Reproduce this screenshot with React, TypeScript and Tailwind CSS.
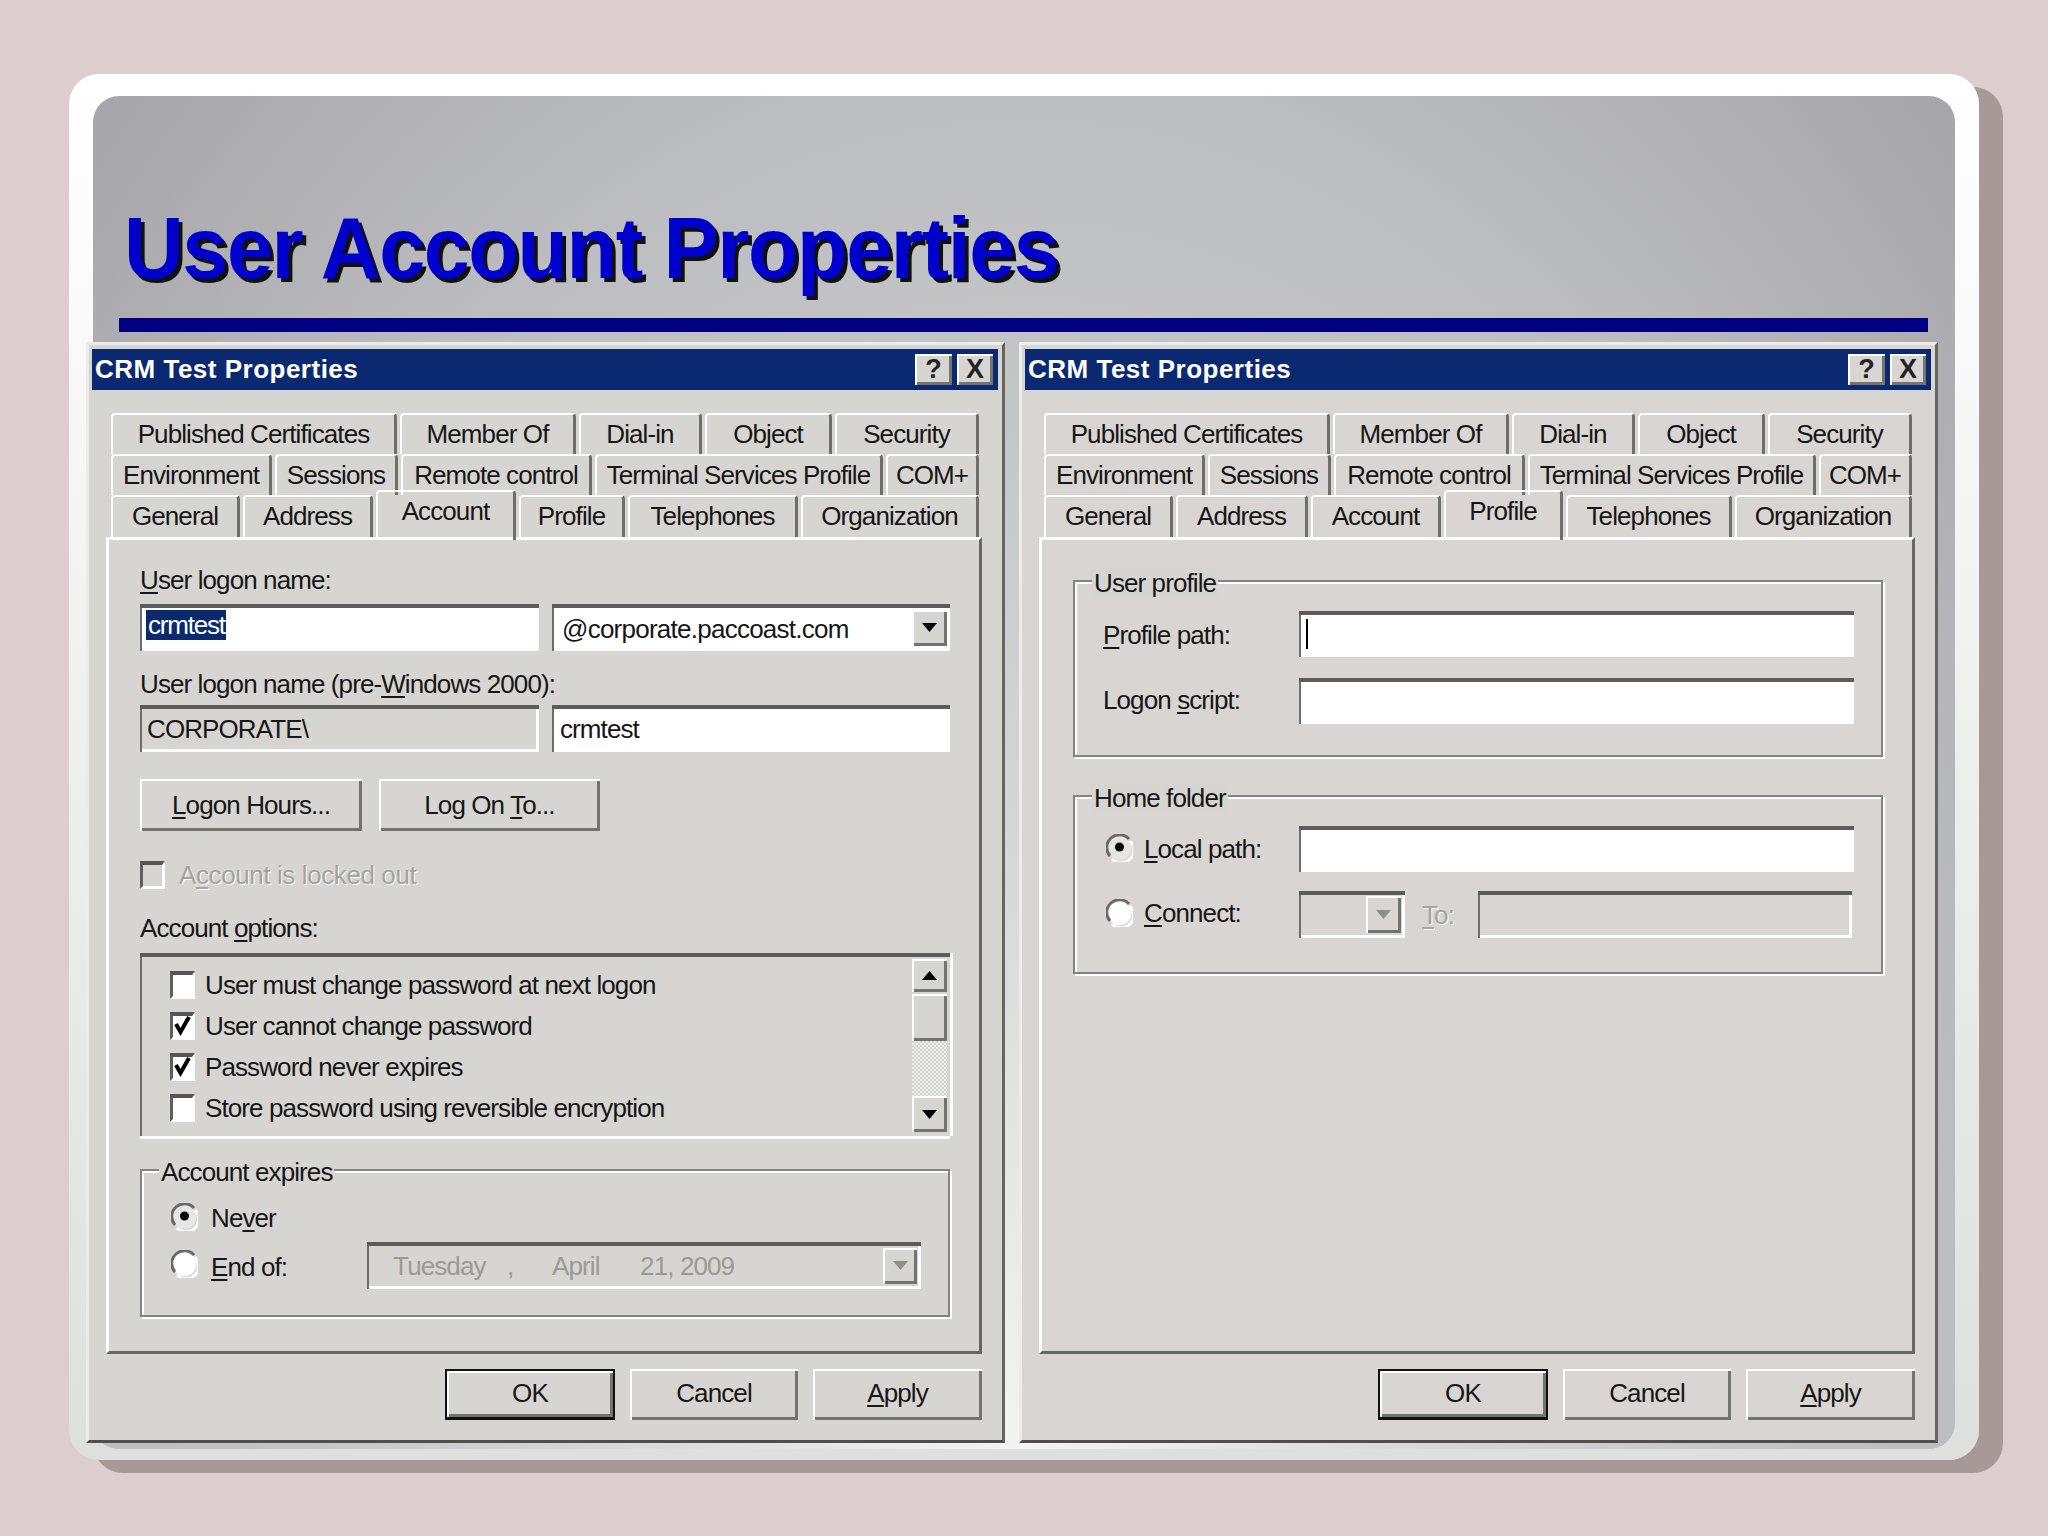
import type { ReactNode } from "react"

const RAISED = "shadow-[inset_2px_2px_0_#fff,inset_-3px_-3px_0_#737370]"
const SUNKEN = "shadow-[inset_0_4px_0_#5c5c5a,inset_2px_0_0_#6e6e6c,inset_-3px_-3px_0_#fff]"
const DISABLED_TEXT = "text-[#a3a39f] [text-shadow:1px_1px_0_#fff]"

const rowOne = [
    {label: "Published Certificates", width: 286},
    {label: "Member Of", width: 176},
    {label: "Dial-in", width: 123},
    {label: "Object", width: 127},
    {label: "Security", width: 144},
]
const rowTwo = [
    {label: "Environment", width: 161},
    {label: "Sessions", width: 123},
    {label: "Remote control", width: 191},
    {label: "Terminal Services Profile", width: 288},
    {label: "COM+", width: 93},
]

function Tab({label, width, active, tall}: {label: string; width: number; active?: boolean; tall?: boolean}) {
    return (
        <div
            style={{width}}
            className={`flex items-center justify-center rounded-t-[4px] border-l-2 border-t-2 border-r-[3px] border-l-white border-t-white border-r-[#6e6e6b] ${
                active ? "relative z-10 -mb-[3px] -mt-[5px] h-[50px] pb-[10px]" : tall ? "h-[42px] pb-[2px]" : "h-[41px] pb-[2px]"
            }`}
        >
            {label}
        </div>
    )
}

function Key({children}: {children: ReactNode}) {
    return <span className="underline decoration-2 underline-offset-[3px]">{children}</span>
}

function Arrow({down = true, disabled}: {down?: boolean; disabled?: boolean}) {
    return (
        <svg width="17" height="11" viewBox="0 0 17 11">
            <path d={down ? "M1 1h15L8.5 10z" : "M1 10h15L8.5 1z"} fill={disabled ? "#8f8f8c" : "#000"} />
        </svg>
    )
}

function Check({checked, disabled}: {checked?: boolean; disabled?: boolean}) {
    return (
        <div
            className={`flex h-[28px] w-[25px] shrink-0 items-center justify-center border-b-[3px] border-l-[3px] border-r-[3px] border-t-[4px] border-b-white border-l-[#5e5e5c] border-r-white border-t-[#545452] ${
                disabled ? "bg-transparent" : "bg-white"
            }`}
        >
            {checked && (
                <svg width="17" height="21" viewBox="0 0 17 21">
                    <path d="M2 8l4.5 8L15 1" fill="none" stroke="#000" strokeWidth="4" />
                </svg>
            )}
        </div>
    )
}

function Radio({on}: {on?: boolean}) {
    return (
        <svg width="27" height="28" viewBox="0 0 27 28" className="mb-[3px] shrink-0">
            <circle cx="13.5" cy="14" r="12" fill={on ? "#e6e6e3" : "#fff"} />
            <path d="M4 22A12.5 12.5 0 0 1 23 5" fill="none" stroke="#6a6a68" strokeWidth="3" />
            <path d="M24 7A12.5 12.5 0 0 1 6 25" fill="none" stroke="#fff" strokeWidth="3" />
            {on && <circle cx="13.5" cy="13" r="4.5" fill="#000" />}
        </svg>
    )
}

function Group({legend, className, children}: {legend: string; className: string; children: ReactNode}) {
    return (
        <div className={`relative border-2 border-[#83837f] shadow-[2px_2px_0_#fff,inset_2px_2px_0_#fff] ${className}`}>
            <div className="absolute -top-[14px] left-[17px] h-[30px] bg-[#d6d5d1] px-[2px] leading-[30px]">{legend}</div>
            {children}
        </div>
    )
}

function PushButton({children, width, isDefault}: {children: ReactNode; width: number; isDefault?: boolean}) {
    return (
        <div
            style={{width}}
            className={`flex h-[51px] items-center justify-center pb-[3px] ${RAISED} ${isDefault ? "border-2 border-b-[3px] border-[#111]" : ""}`}
        >
            {children}
        </div>
    )
}

function AccountPage() {
    return (
        <div className="pl-[31px] pt-[27px]">
            <div className="h-[26px] leading-[26px]">
                <Key>U</Key>ser logon name:
            </div>
            <div className="mt-[11px] flex w-[810px] gap-[13px]">
                <div className={`h-[47px] w-[399px] bg-white pl-[6px] pt-[6px] ${SUNKEN}`}>
                    <span className="inline-block h-[30px] w-[80px] bg-[#0a2a6e] pl-[2px] leading-[30px] tracking-[-1.2px] text-white">crmtest</span>
                </div>
                <div className={`flex h-[47px] w-[398px] items-center justify-between bg-white pl-[10px] pr-[3px] pt-[2px] ${SUNKEN}`}>
                    <span className="tracking-[-0.75px]">@corporate.paccoast.com</span>
                    <div className={`mb-[2px] flex h-[36px] w-[35px] items-center justify-center bg-[#d6d5d1] ${RAISED}`}>
                        <Arrow />
                    </div>
                </div>
            </div>
            <div className="mt-[20px] h-[26px] leading-[26px]">
                User logon name (pre-<Key>W</Key>indows 2000):
            </div>
            <div className="mt-[8px] flex w-[810px] gap-[13px]">
                <div className={`flex h-[47px] w-[399px] items-center pl-[7px] ${SUNKEN}`}>CORPORATE\</div>
                <div className={`flex h-[47px] w-[398px] items-center bg-white pl-[8px] ${SUNKEN}`}>crmtest</div>
            </div>
            <div className="mt-[27px] flex gap-[17px]">
                <div className={`flex h-[52px] w-[222px] items-center justify-center ${RAISED}`}>
                    <span><Key>L</Key>ogon Hours...</span>
                </div>
                <div className={`flex h-[52px] w-[221px] items-center justify-center ${RAISED}`}>
                    <span>Log On <Key>T</Key>o...</span>
                </div>
            </div>
            <div className="mt-[30px] flex h-[28px] items-center gap-[14px]">
                <Check disabled />
                <span className={`tracking-[-0.4px] ${DISABLED_TEXT}`}>A<span className="underline underline-offset-[3px]">c</span>count is locked out</span>
            </div>
            <div className="mt-[26px] h-[26px] leading-[26px]">
                Account <Key>o</Key>ptions:
            </div>
            <div className="mt-[12px] flex h-[183px] w-[810px] justify-between pl-[30px] pr-[3px] pt-[11px] shadow-[inset_0_4px_0_#5c5c5a,inset_2px_0_0_#6e6e6c,0_3px_0_#fff,3px_0_0_#fff]">
                <div className="flex flex-col">
                    {[
                        {label: "User must change password at next logon", checked: false},
                        {label: "User cannot change password", checked: true},
                        {label: "Password never expires", checked: true},
                        {label: "Store password using reversible encryption", checked: false},
                    ].map((row) => (
                        <div key={row.label} className="flex h-[41px] items-center gap-[10px]">
                            <Check checked={row.checked} />
                            <span>{row.label}</span>
                        </div>
                    ))}
                </div>
                <div className="-mt-[5px] flex h-[173px] w-[35px] flex-col">
                    <div className={`flex h-[33px] items-center justify-center ${RAISED}`}>
                        <Arrow down={false} />
                    </div>
                    <div className={`mt-[2px] h-[47px] ${RAISED}`} />
                    <div className="h-[55px] bg-[repeating-conic-gradient(#f2f2f0_0_25%,#cfcfcc_0_50%)] bg-[length:4px_4px]" />
                    <div className={`flex h-[36px] items-center justify-center ${RAISED}`}>
                        <Arrow />
                    </div>
                </div>
            </div>
            <Group legend="Account expires" className="mt-[33px] h-[148px] w-[810px] pl-[29px]">
                <div className="mt-[33px] flex h-[28px] items-center gap-[13px]">
                    <Radio on />
                    <span>Ne<Key>v</Key>er</span>
                </div>
                <div className="mt-[10px] flex h-[47px] items-center">
                    <Radio />
                    <span className="ml-[13px] mt-[2px]"><Key>E</Key>nd of:</span>
                    <div className={`ml-[80px] flex h-[47px] w-[554px] items-center justify-between pl-[26px] pr-[4px] ${SUNKEN} text-[#9a9a96]`}>
                        <div className="flex">
                            <span className="w-[114px]">Tuesday</span>
                            <span className="w-[45px]">,</span>
                            <span className="w-[88px]">April</span>
                            <span>21, 2009</span>
                        </div>
                        <div className={`flex h-[36px] w-[34px] items-center justify-center ${RAISED}`}>
                            <Arrow disabled />
                        </div>
                    </div>
                </div>
            </Group>
        </div>
    )
}

function ProfilePage() {
    return (
        <div className="pl-[31px] pt-[40px]">
            <Group legend="User profile" className="h-[177px] w-[810px] pl-[28px]">
                <div className="mt-[29px] flex h-[46px] items-center">
                    <span className="mt-[2px] w-[196px]"><Key>P</Key>rofile path:</span>
                    <div className={`flex h-[46px] w-[555px] items-center bg-white pl-[7px] ${SUNKEN}`}>
                        <div className="h-[30px] w-[2px] bg-black" />
                    </div>
                </div>
                <div className="mt-[21px] flex h-[46px] items-center">
                    <span className="mb-[3px] w-[196px]">Logon <Key>s</Key>cript:</span>
                    <div className={`h-[46px] w-[555px] bg-white ${SUNKEN}`} />
                </div>
            </Group>
            <Group legend="Home folder" className="mt-[38px] h-[179px] w-[810px] pl-[31px]">
                <div className="mt-[29px] flex h-[46px] items-center">
                    <Radio on />
                    <span className="ml-[11px] w-[155px]"><Key>L</Key>ocal path:</span>
                    <div className={`h-[46px] w-[555px] bg-white ${SUNKEN}`} />
                </div>
                <div className="mt-[19px] flex h-[47px] items-center">
                    <Radio />
                    <span className="mb-[4px] ml-[11px] w-[155px]"><Key>C</Key>onnect:</span>
                    <div className={`flex h-[47px] w-[106px] justify-end pr-[4px] pt-[5px] ${SUNKEN}`}>
                        <div className={`flex h-[37px] w-[35px] items-center justify-center ${RAISED}`}>
                            <Arrow disabled />
                        </div>
                    </div>
                    <span className={`ml-[17px] w-[56px] ${DISABLED_TEXT}`}>
                        <span className="underline underline-offset-[3px]">T</span>o:
                    </span>
                    <div className={`h-[47px] w-[374px] ${SUNKEN}`} />
                </div>
            </Group>
        </div>
    )
}

function PropertiesDialog({rowThree, bg, children}: {rowThree: {label: string; width: number; active?: boolean}[]; bg: string; children: ReactNode}) {
    return (
        <div className={`h-[1101px] w-[919px] shrink-0 border-b-[3px] border-l-[3px] border-r-[3px] border-t-[3px] border-b-[#4e4e4c] border-l-[#ecece8] border-r-[#66665f] border-t-[#ecece8] text-[26px] leading-none tracking-[-0.9px] text-[#161616] ${bg}`}>
            <div className="ml-[3px] mt-[4px] flex h-[41px] w-[906px] items-center justify-between bg-[#0a2970] pl-[3px] pr-[5px]">
                <span className="pb-[2px] text-[26px] font-bold tracking-[0.5px] text-white">CRM Test Properties</span>
                <div className="flex gap-[5px] text-[27px] font-bold tracking-normal text-[#222]">
                    <div className={`flex h-[31px] w-[37px] items-center justify-center ${bg} ${RAISED}`}>?</div>
                    <div className={`flex h-[31px] w-[36px] items-center justify-center ${bg} ${RAISED}`}>X</div>
                </div>
            </div>
            <div className="ml-[22px] mt-[23px] flex flex-col">
                <div className="flex gap-[3px]">{rowOne.map((t) => <Tab key={t.label} {...t} />)}</div>
                <div className="flex gap-[3px]">{rowTwo.map((t) => <Tab key={t.label} {...t} />)}</div>
                <div className="flex items-start gap-[3px]">{rowThree.map((t) => <Tab key={t.label} {...t} tall />)}</div>
            </div>
            <div className="ml-[17px] h-[817px] w-[876px] border-b-[3px] border-l-[3px] border-r-[3px] border-t-[3px] border-b-[#666663] border-l-white border-r-[#666663] border-t-white">
                {children}
            </div>
            <div className="ml-[356px] mt-[15px] flex gap-[15px]">
                <PushButton width={170} isDefault>OK</PushButton>
                <PushButton width={168}>Cancel</PushButton>
                <PushButton width={169}><span><Key>A</Key>pply</span></PushButton>
            </div>
        </div>
    )
}

export default function App() {
    return (
        <div className="h-[1536px] w-[2048px] overflow-hidden bg-[#decdcf] pl-[69px] pt-[74px] font-['Liberation_Sans',Arial,sans-serif]">
            <div className="h-[1386px] w-[1910px] rounded-[30px] bg-gradient-to-b from-white to-[#dde0dc] pl-[24px] pt-[22px] shadow-[24px_13px_0_0_#a99898]">
                <div className="h-[1353px] w-[1862px] rounded-[26px] bg-[radial-gradient(ellipse_at_50%_100%,#f4f4f2_0%,#d8d8d8_30%,#c4c5c7_55%,#bcbdc0_72%,#a6a5a9_100%)]">
                    <h1 className="origin-left scale-x-[0.94] pl-[33px] pt-[108px] text-[88px] font-bold leading-[88px] tracking-[-1.5px] text-[#0000cc] [text-shadow:4px_4px_0_#101010]">
                        User Account Properties
                    </h1>
                    <div className="ml-[26px] mt-[26px] h-[14px] w-[1809px] bg-[#000080]" />
                    <div className="-ml-[7px] mt-[10px] flex gap-[14px]">
                        <PropertiesDialog
                            bg="bg-[#d6d5d1]"
                            rowThree={[
                                {label: "General", width: 129},
                                {label: "Address", width: 130},
                                {label: "Account", width: 140, active: true},
                                {label: "Profile", width: 106},
                                {label: "Telephones", width: 170},
                                {label: "Organization", width: 178},
                            ]}
                        >
                            <AccountPage />
                        </PropertiesDialog>
                        <PropertiesDialog
                            bg="bg-[#d8d5d2]"
                            rowThree={[
                                {label: "General", width: 129},
                                {label: "Address", width: 132},
                                {label: "Account", width: 130},
                                {label: "Profile", width: 119, active: true},
                                {label: "Telephones", width: 166},
                                {label: "Organization", width: 177},
                            ]}
                        >
                            <ProfilePage />
                        </PropertiesDialog>
                    </div>
                </div>
            </div>
        </div>
    )
}
